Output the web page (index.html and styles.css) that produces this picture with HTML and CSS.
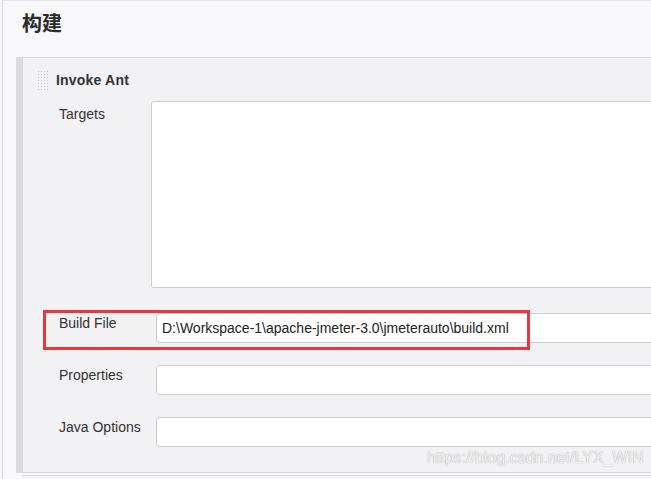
FILE: index.html
```html
<!DOCTYPE html>
<html>
<head>
  <meta charset="utf-8">
  <title>构建</title>
  <link rel="stylesheet" href="styles.css">
</head>
<body>
  <div class="page">
    <h1>构建</h1>

    <div class="section">
      <div class="panel">
        <div class="panel-header">
          <span class="drag-handle"></span>
          <span class="panel-title">Invoke Ant</span>
        </div>

        <div class="row row-targets">
          <label class="row-label" for="targets">Targets</label>
          <textarea id="targets" class="field-area"></textarea>
        </div>

        <div class="row">
          <label class="row-label" for="build-file">Build File</label>
          <input type="text" id="build-file" class="field" value="D:\Workspace-1\apache-jmeter-3.0\jmeterauto\build.xml">
          <div class="highlight-box"></div>
        </div>

        <div class="row">
          <label class="row-label" for="properties">Properties</label>
          <input type="text" id="properties" class="field">
        </div>

        <div class="row">
          <label class="row-label" for="java-options">Java Options</label>
          <input type="text" id="java-options" class="field">
        </div>
      </div>
    </div>
    <div class="next-section"></div>
  </div>

  <div class="watermark">https://blog.csdn.net/LYX_WIN</div>
</body>
</html>
```

FILE: styles.css
```css
html, body {
  margin: 0;
  height: 100%;
  overflow: hidden;
}

body {
  font-family: "Liberation Sans", Arial, sans-serif;
  background-color: #f7f7f8;
  color: #333;
  position: relative;
}

.page {
  margin-left: 2px;
  height: 100%;
  overflow: hidden;
  border-left: 1px solid #d9d9d9;
  border-top: 1px solid #e2e2e2;
  background-color: #f8f7f9;
}

h1 {
  margin: 0;
  padding: 9px 0 0 19px;
  height: 47px;
  font-family: "Noto Sans CJK SC", "Liberation Sans", sans-serif;
  font-size: 20px;
  line-height: 26px;
  font-weight: 700;
  color: #2b2b2b;
}

/* Section with gray bar on the left */
.section {
  margin-left: 13px;
  border-left: 6px solid #dcdcdc;
}

.panel {
  background-color: #f2f1f3;
  border: 1px solid #d6d6d6;
  border-right: none;
  padding: 12px 0 25px 14px;
}

.panel-header {
  display: flex;
  align-items: center;
  height: 20px;
  margin-bottom: 11px;
}

.drag-handle {
  width: 12px;
  height: 20px;
  margin-right: 7px;
  background-image: radial-gradient(circle, #c4c4c4 0.7px, transparent 1px);
  background-size: 3px 3px;
}

.panel-title {
  font-size: 14px;
  font-weight: 700;
  color: #333;
  letter-spacing: 0.2px;
}

.row {
  position: relative;
  display: flex;
  align-items: flex-start;
  padding-left: 22px;
  margin-bottom: 22px;
}

.row-targets {
  margin-bottom: 25px;
}

.row:last-child {
  margin-bottom: 0;
}

.row-label {
  width: 92px;
  flex-shrink: 0;
  font-size: 14px;
  line-height: 16px;
  padding-top: 2px;
  color: #333;
}

.row-targets .row-label {
  padding-top: 5px;
}

.field-area {
  flex: 1;
  min-width: 0;
  height: 187px;
  box-sizing: border-box;
  margin: 0 -8px 0 0;
  border: 1px solid #cbcbcb;
  border-radius: 3px;
  background-color: #fff;
  resize: none;
}

.field {
  flex: 1;
  min-width: 0;
  height: 30px;
  box-sizing: border-box;
  margin: 0 -8px 0 5px;
  padding: 0 5px;
  border: 1px solid #cbcbcb;
  border-radius: 3px;
  background-color: #fff;
  font-family: "Liberation Sans", Arial, sans-serif;
  font-size: 14px;
  color: #222;
}

.highlight-box {
  position: absolute;
  left: 6px;
  top: -3px;
  width: 487px;
  height: 40px;
  box-sizing: border-box;
  border: 3px solid #e6373f;
  pointer-events: none;
}

.next-section {
  margin: 2px 0 0 19px;
  border-top: 1px solid #d6d6d6;
  height: 20px;
  background-color: #f2f1f3;
}

.watermark {
  position: absolute;
  left: 427px;
  top: 449px;
  font-family: "Liberation Sans", Arial, sans-serif;
  font-size: 16px;
  color: rgba(255, 255, 255, 0.9);
  text-shadow: 0 0 1px rgba(0, 0, 0, 0.45);
}
```
